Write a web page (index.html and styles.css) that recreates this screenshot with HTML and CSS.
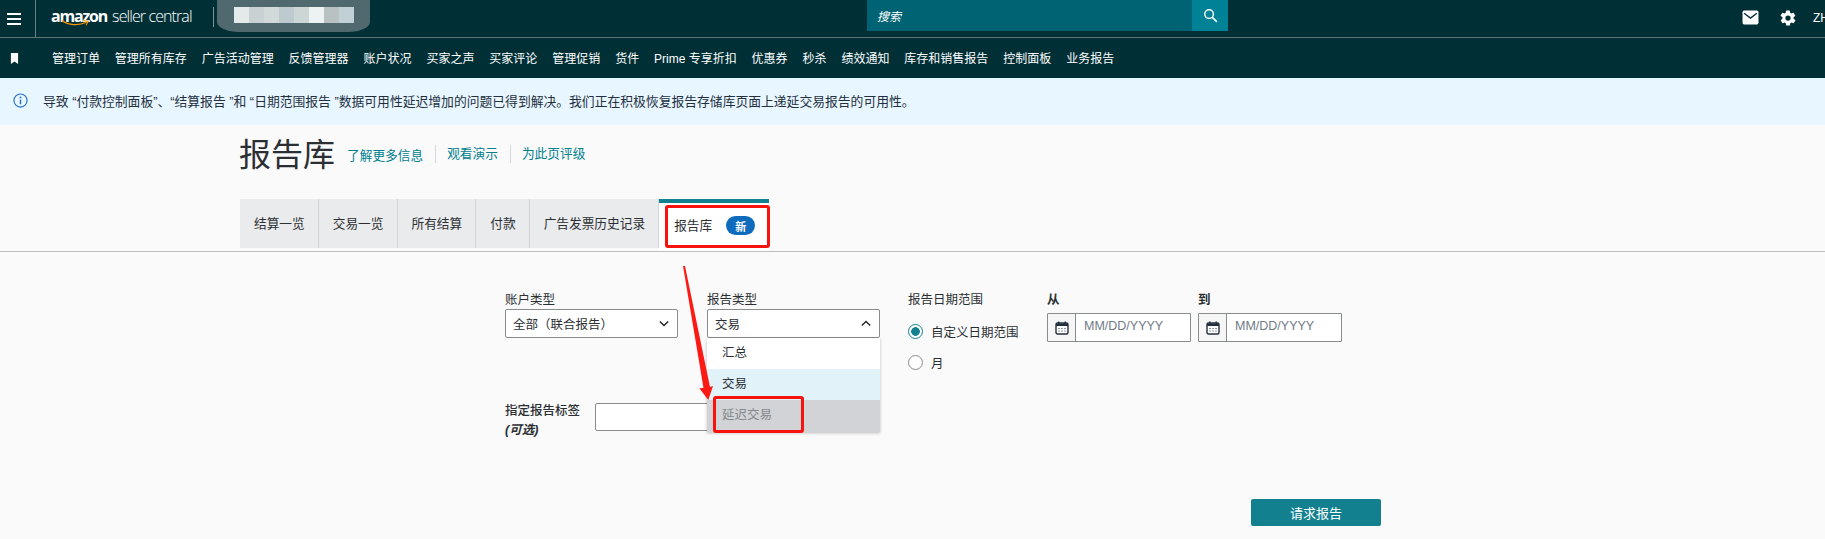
FILE: index.html
```html
<!DOCTYPE html>
<html lang="zh">
<head>
<meta charset="utf-8">
<title>报告库</title>
<link rel="stylesheet" href="styles.css">
</head>
<body>
<header class="topbar">
  <button class="burger" aria-label="菜单"><span></span><span></span><span></span></button>
  <div class="logo">
    <span class="logo-amazon">amazon</span><span class="logo-rest">seller central</span>
    <svg class="smile" viewBox="0 0 40 10"><path d="M1 2c9 6 22 7 33 2" fill="none" stroke="#f90" stroke-width="1.6"/><path d="M30 1.5l6 1.5-2.5 5" fill="none" stroke="#f90" stroke-width="1.4"/></svg>
  </div>
  <div class="store-sep"></div>
  <div class="blur">
    <div class="blur-blocks"><i class="b1"></i><i class="b2"></i><i class="b3"></i><i class="b4"></i><i class="b5"></i><i class="b6"></i><i class="b7"></i><i class="b8"></i></div>
  </div>
  <div class="search">
    <span class="search-text">搜索</span>
    <span class="search-btn">
      <svg viewBox="0 0 16 16" width="15" height="15"><circle cx="6.500" cy="6.500" r="4.600" fill="none" stroke="#fff" stroke-width="1.500"/><path d="M10 10l4.800 4.800" stroke="#fff" stroke-width="1.700"/></svg>
    </span>
  </div>
  <div class="top-right">
    <svg class="mail" viewBox="0 0 16 14" width="17" height="15"><rect x="0.5" y="0.5" width="15" height="13" rx="1.5" fill="#fff"/><path d="M2 3l6 4.500L14 3" fill="none" stroke="#002f36" stroke-width="1.300"/></svg>
    <svg class="gear" viewBox="0 0 24 24" width="18" height="18"><path fill="#fff" d="M19.400 13a7.600 7.600 0 0 0 0-2l2.100-1.600a.5.5 0 0 0 .1-.6l-2-3.500a.5.5 0 0 0-.6-.2l-2.500 1a7.300 7.300 0 0 0-1.700-1l-.4-2.700a.5.5 0 0 0-.5-.4h-4a.5.5 0 0 0-.5.4l-.4 2.700a7.300 7.300 0 0 0-1.700 1l-2.500-1a.5.5 0 0 0-.6.2l-2 3.500a.5.5 0 0 0 .1.6L4.600 11a7.600 7.600 0 0 0 0 2l-2.100 1.600a.5.5 0 0 0-.1.6l2 3.500c.1.2.4.3.6.2l2.500-1c.5.4 1.100.7 1.700 1l.4 2.700c0 .2.2.4.5.4h4c.3 0 .5-.2.5-.4l.4-2.700c.6-.3 1.200-.6 1.700-1l2.500 1c.2.1.5 0 .6-.2l2-3.500a.5.5 0 0 0-.1-.6zM12 15.500a3.500 3.500 0 1 1 0-7 3.500 3.500 0 0 1 0 7z"/></svg>
    <span class="lang">ZH</span>
  </div>
</header>
<nav class="navbar">
  <svg class="bookmark" viewBox="0 0 10 12" width="9" height="11"><path d="M1 0h8v12L5 9.200 1 12z" fill="#fff"/></svg>
  <a>管理订单</a><a>管理所有库存</a><a>广告活动管理</a><a>反馈管理器</a><a>账户状况</a><a>买家之声</a><a>买家评论</a><a>管理促销</a><a>货件</a><a>Prime 专享折扣</a><a>优惠券</a><a>秒杀</a><a>绩效通知</a><a>库存和销售报告</a><a>控制面板</a><a>业务报告</a>
</nav>
<div class="banner">
  <svg viewBox="0 0 16 16" width="15" height="15"><circle cx="8" cy="8" r="7" fill="none" stroke="#1f6fc4" stroke-width="1.200"/><circle cx="8" cy="4.700" r="1" fill="#1f6fc4"/><path d="M8 7v5" stroke="#1f6fc4" stroke-width="1.500"/></svg>
  <span>导致 “付款控制面板”、“结算报告 ”和 “日期范围报告 ”数据可用性延迟增加的问题已得到解决。我们正在积极恢复报告存储库页面上递延交易报告的可用性。</span>
</div>
<main>
  <div class="title-row">
    <h1>报告库</h1>
    <a class="link">了解更多信息</a><a class="link sep">观看演示</a><a class="link sep">为此页评级</a>
  </div>
  <div class="tabs">
    <a class="tab">结算一览</a><a class="tab">交易一览</a><a class="tab">所有结算</a><a class="tab">付款</a><a class="tab">广告发票历史记录</a>
    <a class="tab active">报告库<span class="badge">新</span><span class="red-box tab-box"></span></a>
  </div>
  <section class="form">
    <div class="left">
      <div class="selects">
        <div class="field">
          <label>账户类型</label>
          <div class="select">全部（联合报告）
            <svg viewBox="0 0 12 8" width="10" height="7"><path d="M1 1.500l5 5 5-5" fill="none" stroke="#222" stroke-width="1.600"/></svg>
          </div>
        </div>
        <div class="field">
          <label>报告类型</label>
          <div class="select">交易
            <svg viewBox="0 0 12 8" width="10" height="7"><path d="M1 6.500l5-5 5 5" fill="none" stroke="#222" stroke-width="1.600"/></svg>
          </div>
          <ul class="menu">
            <li>汇总</li>
            <li class="sel">交易</li>
            <li class="dis">延迟交易</li>
          </ul>
          <span class="red-box menu-box"></span>
        </div>
      </div>
      <div class="tag-row">
        <label>指定报告标签<br><em>(可选)</em></label>
        <input class="tag-input" type="text">
      </div>
    </div>
    <div class="range">
      <div class="range-col">
        <label>报告日期范围</label>
        <div class="radio on"><i></i>自定义日期范围</div>
        <div class="radio"><i></i>月</div>
      </div>
      <div class="date from">
        <label>从</label>
        <div class="date-box">
          <span class="cal"><svg viewBox="0 0 14 14" width="14" height="14"><rect x="1" y="2" width="12" height="11" rx="1.500" fill="#fff" stroke="#232f3e" stroke-width="1.400"/><path d="M1 2.500h12V5H1z" fill="#232f3e"/><path d="M3.800.6v2.600M10.200.6v2.600" stroke="#232f3e" stroke-width="1.400"/><path d="M3.500 7.500h1M6.500 7.500h1M9.500 7.500h1M3.500 10h1M6.500 10h1M9.500 10h1" stroke="#232f3e"/></svg></span>
          <span class="ph">MM/DD/YYYY</span>
        </div>
      </div>
      <div class="date">
        <label>到</label>
        <div class="date-box">
          <span class="cal"><svg viewBox="0 0 14 14" width="14" height="14"><rect x="1" y="2" width="12" height="11" rx="1.500" fill="#fff" stroke="#232f3e" stroke-width="1.400"/><path d="M1 2.500h12V5H1z" fill="#232f3e"/><path d="M3.800.6v2.600M10.200.6v2.600" stroke="#232f3e" stroke-width="1.400"/><path d="M3.500 7.500h1M6.500 7.500h1M9.500 7.500h1M3.500 10h1M6.500 10h1M9.500 10h1" stroke="#232f3e"/></svg></span>
          <span class="ph">MM/DD/YYYY</span>
        </div>
      </div>
    </div>
  </section>
  <div class="actions"><button class="request">请求报告</button></div>
</main>
<svg class="arrow" viewBox="0 0 40 140" width="40" height="140"><path d="M3 0 L5 0 L30 121 L33 120 L28.300 134 L19.300 122.300 L23.500 122 Z" fill="#fb1a14"/></svg>
</body>
</html>
```
FILE: styles.css
```css
* { box-sizing: border-box; }
html, body { margin: 0; height: 539px; overflow: hidden; }
body {
  position: relative;
  background: #fafafa;
  color: #2b2f33;
  font-family: "Liberation Sans", "Noto Sans CJK SC", sans-serif;
  font-size: 12.5px;
}
a { display: block; }

.topbar {
  display: flex;
  align-items: flex-start;
  height: 38px;
  background: #002f36;
  border-bottom: 1px solid #5d7476;
  color: #fff;
}
.burger {
  display: flex;
  flex-direction: column;
  justify-content: center;
  gap: 3px;
  width: 36px;
  height: 37px;
  padding: 0 0 0 7px;
  background: none;
  border: 0;
  border-right: 1px solid #6a8083;
}
.burger span { width: 14px; height: 2px; background: #fff; }
.logo {
  position: relative;
  display: flex;
  align-items: baseline;
  width: 177px;
  height: 37px;
  padding: 5px 0 0 15px;
  font-family: "Open Sans", sans-serif;
  color: #fff;
}
.logo-amazon { font-size: 16px; font-weight: 700; letter-spacing: -1.2px; }
.logo-rest { font-size: 16px; font-weight: 300; margin-left: 5px; letter-spacing: -0.9px; }
.smile { position: absolute; left: 25px; top: 19px; width: 30px; height: 8px; }
.store-sep { width: 1px; height: 20px; margin-top: 7px; background: #7f9295; }
.blur {
  display: flex;
  align-items: center;
  justify-content: center;
  width: 153px;
  height: 32px;
  margin-left: 3px;
  background: #50696f;
  border-radius: 0 0 22px 22px / 0 0 10px 10px;
}
.blur-blocks { display: flex; margin-bottom: 3px; }
.blur-blocks i { width: 15px; height: 16px; }
.b1 { background: #e4eaea; } .b2 { background: #c8d2d3; } .b3 { background: #d2dad9; }
.b4 { background: #bdcbd0; } .b5 { background: #ccd6d4; } .b6 { background: #edf2f3; }
.b7 { background: #b9c2c3; } .b8 { background: #c1d0d4; }
.search {
  display: flex;
  justify-content: space-between;
  align-items: center;
  width: 361px;
  height: 31px;
  margin-left: 497px;
  padding-left: 10px;
  background: #006373;
  font-style: italic;
  font-size: 12px;
}
.search-btn {
  display: flex;
  align-items: center;
  justify-content: center;
  width: 36px;
  height: 31px;
  background: #008296;
}
.top-right {
  display: flex;
  flex: none;
  align-items: center;
  height: 37px;
  margin-left: auto;
  width: 83px;
  padding-bottom: 2px;
}
.gear { margin-left: 20px; flex: none; }
.mail { flex: none; }
.lang { margin-left: 16px; font-size: 12px; white-space: nowrap; }

.navbar {
  display: flex;
  align-items: center;
  gap: 14.9px;
  height: 40px;
  padding: 0 0 2px 10px;
  background: #002f36;
  color: #fff;
  font-size: 12px;
}
.bookmark { margin: 2px 18px 0 0; }

.banner {
  display: flex;
  align-items: center;
  gap: 15px;
  height: 47px;
  padding: 0 0 3px 13px;
  background: #e8f6ff;
  font-size: 12.8px;
  color: #232f3e;
}

.title-row {
  display: flex;
  align-items: center;
  height: 52px;
  margin-top: 2px;
  padding: 4px 0 0 239px;
}
h1 { margin: 0 12px 0 0; font-size: 32px; font-weight: 400; color: #2b2f33; line-height: 48px; }
.link { font-size: 12.7px; color: #00808f; margin-bottom: 2px; }
.link.sep { margin-left: 12px; padding-left: 11px; border-left: 1px solid #d5d9d9; line-height: 18px; }

.tabs {
  position: relative;
  display: flex;
  height: 53px;
  margin-top: 20px;
  padding: 0 0 0 240px;
  border-bottom: 1px solid #bdbdbd;
  font-size: 12.7px;
}
.tab {
  display: flex;
  align-items: center;
  height: 49px;
  padding: 0 13px 3px 14px;
  background: #eaebed;
  border-right: 1px solid #d3d5d8;
}
.tab.active {
  position: relative;
  width: 110px;
  height: 52px;
  padding: 0 0 6px 15px;
  background: #fff;
  border-top: 4px solid #12808f;
  border-right: 0;
}
.badge {
  display: flex;
  align-items: center;
  justify-content: center;
  width: 29px;
  height: 19px;
  margin: 3px 0 0 14px;
  border-radius: 10px;
  background: #0f6cbd;
  color: #fff;
  font-size: 11px;
  font-weight: 700;
}
.red-box {
  position: absolute;
  border: 3px solid #f8120e;
  border-radius: 3px;
  pointer-events: none;
}
.tab-box { left: 6px; top: 2px; width: 105px; height: 43px; }

.form { display: flex; padding: 39px 0 0 505px; }
.left { width: 403px; }
.selects { display: flex; gap: 29px; }
.field { position: relative; width: 173px; }
.field label { display: block; height: 18px; line-height: 18px; }
.select {
  display: flex;
  justify-content: space-between;
  align-items: center;
  height: 29px;
  padding: 0 8px 0 7px;
  background: #fff;
  border: 1px solid #888c8c;
  border-radius: 2px;
}
.menu {
  position: absolute;
  z-index: 2;
  left: 0;
  top: 47px;
  width: 173px;
  margin: 0;
  padding: 0;
  list-style: none;
  background: #fff;
  box-shadow: 0 1px 3px rgba(0,0,0,.25);
}
.menu li { height: 31px; line-height: 31px; padding-left: 15px; }
.menu .sel { background: #e1f2f8; }
.menu .dis { height: 32px; background: #d1d3d6; color: #85888b; }
.menu-box { z-index: 3; left: 6px; top: 105px; width: 91px; height: 37px; }
.tag-row { display: flex; margin-top: 65px; }
.tag-row label { width: 90px; line-height: 19px; margin-top: -1px; font-weight: 500; }
.tag-row em { font-weight: 700; }
.tag-input {
  width: 120px;
  height: 28px;
  background: #fff;
  border: 1px solid #888c8c;
  border-radius: 2px;
}

.range { display: flex; }
.range-col { width: 139px; }
.range-col label { display: block; line-height: 18px; }
.radio { display: flex; align-items: center; gap: 8px; height: 16px; margin-top: 15px; white-space: nowrap; }
.range-col label + .radio { margin-top: 14px; }
.radio i {
  width: 15px;
  height: 15px;
  border: 1px solid #888c8c;
  border-radius: 50%;
  background: #fff;
}
.radio.on i { border: 1.5px solid #12808f; background: radial-gradient(circle, #12808f 0 4px, #fff 4.6px); }
.date { width: 144px; }
.date.from { width: 151px; }
.date label { display: block; height: 22px; line-height: 18px; font-weight: 700; }
.date-box {
  display: flex;
  width: 144px;
  height: 29px;
  background: #fff;
  border: 1px solid #888c8c;
  border-radius: 1px;
}
.cal {
  display: flex;
  align-items: center;
  justify-content: center;
  width: 28px;
  background: #f6f6f7;
  border-right: 1px solid #888c8c;
}
.ph { padding: 5px 0 0 8px; font-size: 12.5px; color: #6f7a86; }

.actions { margin-top: 59px; padding-left: 1251px; }
.request {
  display: block;
  width: 130px;
  height: 27px;
  padding: 0;
  border: 0;
  border-radius: 2px;
  background: #12808f;
  color: #fff;
  font: inherit;
  font-size: 13px;
}
.arrow { position: absolute; z-index: 4; left: 680px; top: 266px; }
```
